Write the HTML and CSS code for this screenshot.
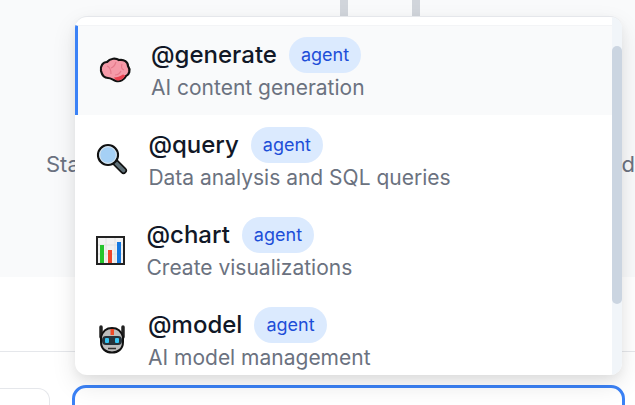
FILE: index.html
```html
<!DOCTYPE html>
<html lang="en">
<head>
<meta charset="utf-8">
<title>Agent mentions</title>
<link rel="stylesheet" href="styles.css">
</head>
<body>
<div class="page">
  <section class="canvas">
    <div class="connectors"><span class="connector"></span><span class="connector"></span></div>
    <div class="labels"><span class="label">Start</span><span class="label">End</span></div>
  </section>
  <section class="lower">
    <div class="rule"></div>
    <div class="inputs">
      <div class="side-box"></div>
      <div class="main-input"></div>
    </div>
  </section>

  <div class="popup">
    <div class="list">
      <div class="item active">
        <svg class="icon icon-brain" viewBox="0 0 34 28"><path d="M3 15C2 10 5 6 9 6C12 2 18 2 21 4C26 3 30 6 30 10C33 14 31 19 28 20C26 24 22 26 18 25C15 24 13 22 10 22C6 22 4 19 3 15Z" fill="#f59aa8" stroke="#111" stroke-width="2.200"/><path d="M20 24.500C23 24.500 26 22 27.500 19.500L25 18.500C22 20.500 19 21.500 16 21.500C17 23.500 18 24.500 20 24.500Z" fill="#e8414f"/><path d="M9 10C12 11 13 13 13 18M13 12C16 11 17 9 18 6M24 8C23 11 23 13 26 14M17 19C20 19 22 17 23 15" fill="none" stroke="#e57b8c" stroke-width="1.200"/></svg>
        <div class="body"><div class="head"><span class="name">@generate</span><span class="badge">agent</span></div><div class="desc">AI content generation</div></div>
      </div>
      <div class="item">
        <svg class="icon icon-search" viewBox="0 0 32 32"><path d="M19 19L27.500 27.500" stroke="#111" stroke-width="7" stroke-linecap="round"/><path d="M19 19L27.500 27.500" stroke="#5f7078" stroke-width="3.800" stroke-linecap="round"/><circle cx="12" cy="12" r="10" fill="#a5d0f5" stroke="#111" stroke-width="2.200"/><circle cx="12" cy="12" r="8.300" fill="none" stroke="#dfe5e8" stroke-width="1"/></svg>
        <div class="body"><div class="head"><span class="name">@query</span><span class="badge">agent</span></div><div class="desc">Data analysis and SQL queries</div></div>
      </div>
      <div class="item">
        <svg class="icon icon-chart" viewBox="0 0 29 29"><rect x="1" y="1" width="27" height="27" fill="#f1f1f1" stroke="#222" stroke-width="2"/><path d="M2 9H27M2 18H27M10 2V27M19 2V27" stroke="#e1e1e1" stroke-width="1"/><rect x="4" y="9" width="4" height="18" fill="#25c42c"/><rect x="12" y="14" width="4" height="13" fill="#f0452b"/><rect x="21" y="6" width="4" height="21" fill="#1478e0"/></svg>
        <div class="body"><div class="head"><span class="name">@chart</span><span class="badge">agent</span></div><div class="desc">Create visualizations</div></div>
      </div>
      <div class="item">
        <svg class="icon icon-robot" viewBox="0 0 30 30"><path d="M4 3V13M26 3V13" stroke="#222" stroke-width="3.500" stroke-linecap="round"/><path d="M4 13C6 6 10 4 15 4C20 4 24 6 26 13V18C26 25 21 28.500 15 28.500C9 28.500 4 25 4 18Z" fill="#bdbdbd" stroke="#111" stroke-width="2"/><rect x="13.500" y="5" width="3.500" height="6" fill="#ef4a28"/><rect x="5" y="12" width="20" height="9" rx="4" fill="#26323a"/><rect x="8" y="14" width="4" height="5" rx="1" fill="#35c4f2"/><rect x="18" y="14" width="4" height="5" rx="1" fill="#35c4f2"/><path d="M11 24.500H19" stroke="#333" stroke-width="1.400"/></svg>
        <div class="body"><div class="head"><span class="name">@model</span><span class="badge">agent</span></div><div class="desc">AI model management</div></div>
      </div>
    </div>
    <div class="scrollbar"><div class="thumb"></div></div>
  </div>
</div>
</body>
</html>
```

FILE: styles.css
```css
* { box-sizing: border-box; }
html, body { margin: 0; padding: 0; height: 100%; overflow: hidden; background: #fff; }
body { font-family: Inter, "Liberation Sans", sans-serif; }
.page { position: relative; width: 635px; height: 405px; overflow: hidden; }

.canvas { height: 277px; background: #f9fafb; display: flex; flex-direction: column; }
.connectors { display: flex; gap: 64px; padding-left: 340px; }
.connector { width: 8px; height: 16px; background: #d1d5db; }
.labels { display: flex; justify-content: space-between; padding: 133px 0 0 46px; font-size: 22px; line-height: 30px; color: #6b7280; }

.lower { height: 128px; background: #fff; }
.rule { margin-top: 74px; height: 1px; background: #e5e7eb; }
.inputs { display: flex; gap: 22px; margin-top: 33px; }
.side-box { width: 50px; height: 40px; margin-top: 3px; border: 1px solid #e5e7eb; border-left: 0; border-radius: 0 12px 0 0; }
.main-input { width: 553px; height: 40px; border: 3px solid #3b82f6; border-radius: 14px; background: #fff; }

.popup { position: absolute; left: 75px; top: 16px; width: 547px; height: 359px; background: #fff; border-top: 1px solid #e5e7eb; border-radius: 12px; overflow: hidden; display: flex; box-shadow: 0 10px 25px rgba(0,0,0,.1), 0 4px 10px rgba(0,0,0,.05); }
.list { flex: 1; padding-top: 8px; min-width: 0; }
.item { display: flex; align-items: center; height: 90px; padding-left: 20px; border-left: 3px solid transparent; gap: 19px; border-top: 1px solid transparent; }
.item.active { background: #f9fafb; border-left-color: #3b82f6; border-top-color: #f3f4f6; }
.icon { flex: none; display: block; }
.icon-brain { width: 34px; height: 28px; margin-top: -2px; }
.icon-search { width: 32px; height: 32px; margin: -3px 1.400px 0 -2px; }
.icon-chart { width: 29px; height: 29px; margin: -1px 2.500px 0 -2px; }
.icon-robot { width: 30px; height: 30px; margin: -3px 2px 0 -1px; }
.body { min-width: 0; }
.head { display: flex; align-items: center; gap: 12px; height: 36px; margin-top: -2px; }
.name { font-size: 24px; font-weight: 500; color: #111827; line-height: 32px; }
.badge { height: 36px; padding: 0 12px; border-radius: 18px; background: #dbeafe; color: #1d4ed8; font-size: 18px; line-height: 36px; }
.desc { font-size: 21px; line-height: 30px; color: #6b7280; white-space: nowrap; }
.scrollbar { flex: none; width: 10px; background: #f1f5f9; padding-top: 29px; }
.thumb { height: 258px; background: #cbd5e1; border-radius: 5px; }
```
